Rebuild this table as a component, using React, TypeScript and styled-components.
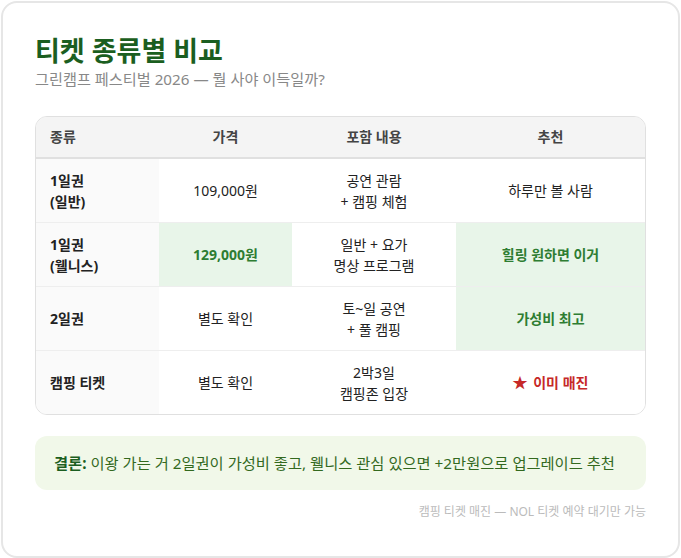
import React from 'react'
import styled, { createGlobalStyle } from 'styled-components'

const GlobalStyle = createGlobalStyle`
  body {
    margin: 0;
    background: #ffffff;
    font-family: "Noto Sans", "Noto Sans CJK KR", sans-serif;
  }
`

const Page = styled.div`
  padding: 1px;
`

const Card = styled.div`
  border: 2px solid #e6e6e6;
  border-radius: 16px;
  padding: 32px 32px 36px;
  background: #fff;
`

const Title = styled.h1`
  margin: 0;
  font-size: 27px;
  line-height: 32px;
  font-weight: 700;
  color: #1b5e20;
`

const Subtitle = styled.p`
  margin: 2px 0 0;
  font-size: 15.2px;
  line-height: 20px;
  color: #888;
`

const TableWrap = styled.div`
  margin-top: 27px;
  border: 1px solid #e0e0e0;
  border-radius: 12px;
  overflow: hidden;
`

const Table = styled.table`
  width: 100%;
  border-collapse: collapse;
  table-layout: fixed;
  font-size: 14px;
`

const Th = styled.th<{ $left?: boolean }>`
  background: #f4f4f4;
  border-bottom: 2px solid #e0e0e0;
  padding: 10px 14px;
  line-height: 20px;
  font-weight: 600;
  color: #444;
  text-align: ${p => (p.$left ? 'left' : 'center')};
`

const Row = styled.tr`
  & + & td {
    border-top: 1px solid #eeeeee;
  }
`

const Td = styled.td<{ $kind?: 'name' | 'good' | 'sold' }>`
  padding: 10.5px 14px;
  line-height: 21px;
  color: ${p =>
    p.$kind === 'good' ? '#2e7d32' : p.$kind === 'sold' ? '#c62828' : '#222'};
  background: ${p =>
    p.$kind === 'name' ? '#fafafa' : p.$kind === 'good' ? '#e8f5e9' : '#fff'};
  font-weight: ${p => (p.$kind ? 700 : 400)};
  text-align: ${p => (p.$kind === 'name' ? 'left' : 'center')};
`

const Star = styled.span`
  font-size: 15px;
  margin-right: 2px;
`

const Conclusion = styled.div`
  margin-top: 21px;
  background: #f1f8e9;
  border-radius: 12px;
  padding: 17px 19px;
  font-size: 15.3px;
  line-height: 20px;
  color: #33691e;
  b {
    color: #1b5e20;
  }
`

const Footer = styled.div`
  margin-top: 14px;
  text-align: right;
  font-size: 12px;
  line-height: 16px;
  color: #bbb;
`

type Kind = 'name' | 'good' | 'sold' | undefined
type Cell = { text: React.ReactNode; kind?: Kind }

const rows: Cell[][] = [
  [
    { text: <>1일권<br />(일반)</>, kind: 'name' },
    { text: '109,000원' },
    { text: <>공연 관람<br />+ 캠핑 체험</> },
    { text: '하루만 볼 사람' },
  ],
  [
    { text: <>1일권<br />(웰니스)</>, kind: 'name' },
    { text: '129,000원', kind: 'good' },
    { text: <>일반 + 요가<br />명상 프로그램</> },
    { text: '힐링 원하면 이거', kind: 'good' },
  ],
  [
    { text: '2일권', kind: 'name' },
    { text: '별도 확인' },
    { text: <>토~일 공연<br />+ 풀 캠핑</> },
    { text: '가성비 최고', kind: 'good' },
  ],
  [
    { text: '캠핑 티켓', kind: 'name' },
    { text: '별도 확인' },
    { text: <>2박3일<br />캠핑존 입장</> },
    { text: <><Star>★</Star> 이미 매진</>, kind: 'sold' },
  ],
]

export default function App() {
  return (
    <Page>
      <GlobalStyle />
      <Card>
        <Title>티켓 종류별 비교</Title>
        <Subtitle>그린캠프 페스티벌 2026 — 뭘 사야 이득일까?</Subtitle>
        <TableWrap>
          <Table>
            <colgroup>
              <col style={{ width: 123 }} />
              <col style={{ width: 133 }} />
              <col style={{ width: 164 }} />
              <col />
            </colgroup>
            <thead>
              <tr>
                <Th $left>종류</Th>
                <Th>가격</Th>
                <Th>포함 내용</Th>
                <Th>추천</Th>
              </tr>
            </thead>
            <tbody>
              {rows.map((r, i) => (
                <Row key={i}>
                  {r.map((c, j) => (
                    <Td key={j} $kind={c.kind}>
                      {c.text}
                    </Td>
                  ))}
                </Row>
              ))}
            </tbody>
          </Table>
        </TableWrap>
        <Conclusion>
          <b>결론:</b> 이왕 가는 거 2일권이 가성비 좋고, 웰니스 관심 있으면 +2만원으로 업그레이드 추천
        </Conclusion>
        <Footer>캠핑 티켓 매진 — NOL 티켓 예약 대기만 가능</Footer>
      </Card>
    </Page>
  )
}
